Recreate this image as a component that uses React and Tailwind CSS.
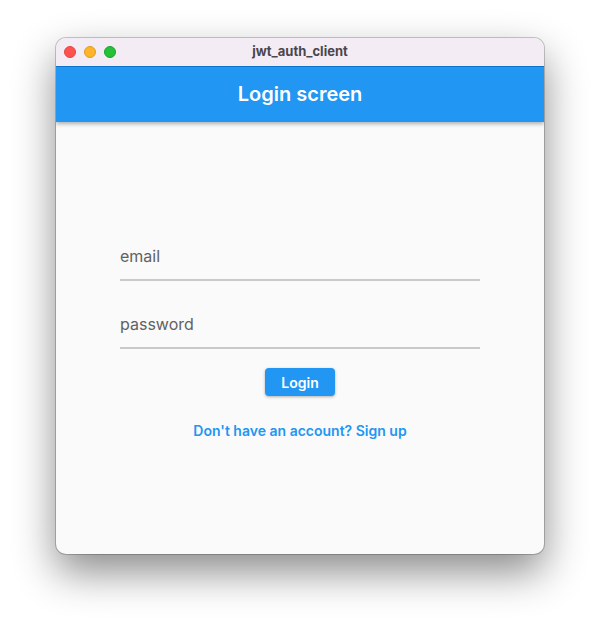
import React from "react";

function TitleBar({ title }) {
  return (
    <header className="relative flex h-7 items-center justify-center bg-[#f3ecf5]">
      <div className="absolute left-2 flex gap-2">
        <button type="button" aria-label="Close" className="size-3 rounded-full border border-[#e2463f] bg-[#ff5150]" />
        <button type="button" aria-label="Minimize" className="size-3 rounded-full border border-[#dc9c22] bg-[#ffb429]" />
        <button type="button" aria-label="Zoom" className="size-3 rounded-full border border-[#1aa22c] bg-[#25c138]" />
      </div>
      <span className="text-[13px] font-bold text-[#4a464b]">{title}</span>
    </header>
  );
}

function Field({ id, type }) {
  return (
    <div className="grid h-12 items-center border-b-2 border-[#c9c9c9]">
      <input
        id={id}
        type={type}
        placeholder=" "
        className="peer col-start-1 row-start-1 h-full w-full bg-transparent text-base text-[#212121] outline-none"
      />
      <label
        htmlFor={id}
        className="pointer-events-none col-start-1 row-start-1 text-base text-[#616161] peer-[:not(:placeholder-shown)]:invisible"
      >
        {id}
      </label>
    </div>
  );
}

export default function App() {
  return (
    <div className="min-h-screen bg-white px-14 pt-[38px] pb-[74px] font-['Inter',sans-serif]">
      <main className="overflow-hidden rounded-[10px] bg-[#fafafa] shadow-[0_0_0_1px_rgba(0,0,0,0.2),0_18px_42px_rgba(0,0,0,0.46)]">
        <TitleBar title="jwt_auth_client" />
        <div className="flex h-14 items-center justify-center border-t border-b border-t-[#0f72cb] border-b-[#2196f3] bg-[#2196f3] shadow-[0_2px_4px_rgba(0,0,0,0.3)]">
          <h1 className="text-xl font-semibold text-white">Login screen</h1>
        </div>
        <form className="flex flex-col px-16 pt-[111px] pb-[113px]" onSubmit={(e) => e.preventDefault()}>
          <div className="flex flex-col gap-5">
            <Field id="email" type="email" />
            <Field id="password" type="password" />
          </div>
          <button type="submit" className="mt-[19px] h-7 self-center rounded-sm bg-[#2196f3] px-4 pt-px text-sm font-semibold text-white shadow-[0_1px_3px_rgba(0,0,0,0.3)]">
            Login
          </button>
          <a href="#signup" className="mt-[25px] self-center text-sm font-semibold text-[#2196f3]">
            Don't have an account? Sign up
          </a>
        </form>
      </main>
    </div>
  );
}
